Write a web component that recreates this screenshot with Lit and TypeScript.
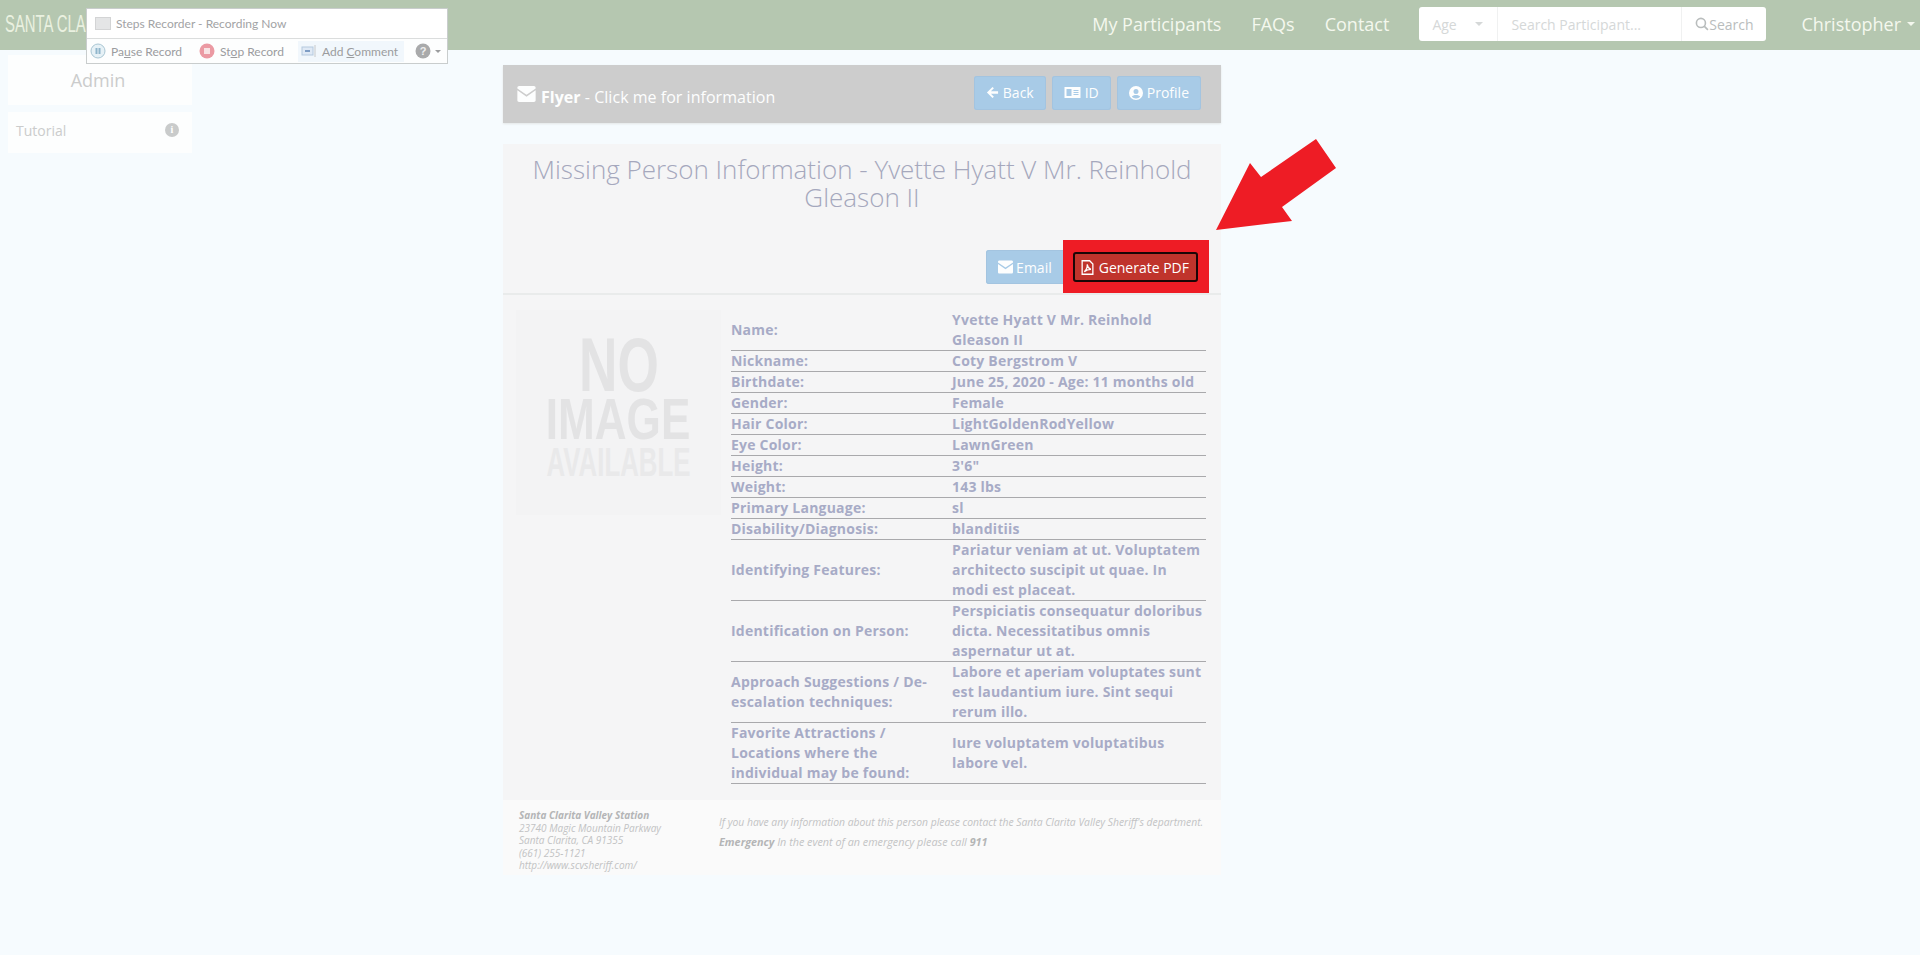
import { html, LitElement, css } from "lit";
import { customElement } from "lit/decorators.js";

const ENVELOPE = html`<svg class="ico" viewBox="0 0 16 14"><path fill="currentColor" d="M0 1.5C0 .7.7 0 1.500 0h13c.8 0 1.500.7 1.500 1.500v.6L8 7.600 0 2.100zM0 3.800V12.500c0 .8.7 1.500 1.500 1.500h13c.8 0 1.500-.7 1.500-1.500V3.800L8 9.300z"/></svg>`;

const ROWS: [string, string[]][] = [
  ["Name:", ["Yvette Hyatt V Mr. Reinhold", "Gleason II"]],
  ["Nickname:", ["Coty Bergstrom V"]],
  ["Birthdate:", ["June 25, 2020 - Age: 11 months old"]],
  ["Gender:", ["Female"]],
  ["Hair Color:", ["LightGoldenRodYellow"]],
  ["Eye Color:", ["LawnGreen"]],
  ["Height:", ["3'6\""]],
  ["Weight:", ["143 lbs"]],
  ["Primary Language:", ["sl"]],
  ["Disability/Diagnosis:", ["blanditiis"]],
  ["Identifying Features:", ["Pariatur veniam at ut. Voluptatem", "architecto suscipit ut quae. In", "modi est placeat."]],
  ["Identification on Person:", ["Perspiciatis consequatur doloribus", "dicta. Necessitatibus omnis", "aspernatur ut at."]],
  ["Approach Suggestions / De-\nescalation techniques:", ["Labore et aperiam voluptates sunt", "est laudantium iure. Sint sequi", "rerum illo."]],
  ["Favorite Attractions /\nLocations where the\nindividual may be found:", ["Iure voluptatem voluptatibus", "labore vel."]],
];

@customElement("app-root")
export class AppRoot extends LitElement {
  static styles = css`
    :host {
      display: block;
      position: relative;
      height: 955px;
      overflow: hidden;
      background: #f6fbfe;
      font-family: "Open Sans", sans-serif;
      color: #a7abc6;
    }

    /* top bar */
    .navbar {
      height: 50px;
      box-sizing: border-box;
      padding-bottom: 2px;
      background: #b5c7b0;
      display: flex;
      align-items: center;
      color: #f4f8ee;
    }
    .brand {
      margin-left: 5px;
      font-family: "Liberation Sans", sans-serif;
      font-size: 24px;
      transform: scaleX(0.62);
      transform-origin: left center;
      white-space: nowrap;
      color: #eaf1e0;
    }
    .nav-links {
      margin-left: auto;
      display: flex;
      gap: 30px;
      font-size: 18px;
    }
    .search {
      margin-left: 30px;
      width: 347px;
      height: 34px;
      box-sizing: border-box;
      background: #fff;
      border-radius: 3px;
      display: grid;
      grid-template-columns: 79px 1fr 84px;
      font-size: 14px;
      color: #d5d8d8;
    }
    .search > div {
      display: flex;
      align-items: center;
    }
    .search .age {
      padding-left: 13px;
      justify-content: space-between;
      padding-right: 14px;
      border-right: 1px solid #f0f1f1;
    }
    .caret-s {
      width: 0;
      height: 0;
      border: 4px solid transparent;
      border-top-color: currentColor;
      border-bottom: 0;
    }
    .caret-xs {
      border-width: 3px 3px 0;
    }
    .search .field {
      padding-left: 13px;
      border-right: 1px solid #f0f1f1;
    }
    .search .go {
      color: #b9bdbd;
      justify-content: center;
      gap: 0;
    }
    .user {
      margin: 0 5px 0 35px;
      font-size: 18px;
      display: flex;
      align-items: center;
      gap: 6px;
    }

    /* page */
    .page {
      display: grid;
      grid-template-columns: 503px 718px;
    }
    .side {
      padding: 5px 0 0 8px;
      width: 184px;
      color: #cbcccc;
    }
    .side .head {
      height: 50px;
      box-sizing: border-box;
      padding-right: 4px;
      background: #fdfefe;
      display: flex;
      align-items: center;
      justify-content: center;
      font-size: 18px;
    }
    .side .item {
      margin-top: 7px;
      height: 41px;
      box-sizing: border-box;
      padding: 0 13px 4px 8px;
      background: #fdfefe;
      display: flex;
      align-items: center;
      justify-content: space-between;
      font-size: 14px;
    }
    .info {
      width: 14px;
      height: 14px;
      border-radius: 50%;
      background: #c9cbcb;
      color: #fff;
      font: bold 10px/14px "Liberation Serif", serif;
      text-align: center;
      margin-top: -1px;
    }

    .flyer-bar {
      margin-top: 15px;
      height: 58px;
      box-sizing: border-box;
      background: #cdcdcd;
      box-shadow: 0 1px 2px #e3e6e6;
      padding: 0 20px 0 14px;
      display: flex;
      align-items: center;
      justify-content: space-between;
      color: #fdfefe;
      font-size: 16px;
    }
    .flyer-title {
      display: flex;
      align-items: center;
      gap: 5px;
      padding-top: 5px;
      letter-spacing: 0.03px;
    }
    .flyer-title .ico {
      width: 19px;
      height: 16px;
      margin-top: -5px;
    }
    .btns {
      display: flex;
      gap: 6px;
      margin-top: -3px;
    }
    .btn {
      height: 34px;
      box-sizing: border-box;
      padding: 0 12px;
      border-radius: 3px;
      background: #a8cbe7;
      box-shadow: inset 0 0 0 1px #a3c4e0;
      color: #fdfefe;
      font-size: 14px;
      display: flex;
      align-items: center;
      gap: 4px;
      white-space: nowrap;
    }
    .ico {
      width: 13px;
      height: 13px;
      flex: none;
    }
    .ico-id {
      width: 17px;
    }
    .ico-user {
      width: 14px;
      height: 14px;
    }

    .card {
      margin-top: 21px;
      background: #f5f5f6;
      height: 731px;
      display: flex;
      flex-direction: column;
    }
    h1 {
      margin: 0;
      padding: 11px 20px 0;
      height: 95px;
      font-size: 26px;
      line-height: 28px;
      font-weight: 300;
      text-align: center;
      color: #a5a8bd;
    }
    .actions {
      display: flex;
      justify-content: flex-end;
      padding-right: 23px;
      height: 45px;
      box-sizing: border-box;
      border-bottom: 2px solid #e9ebeb;
    }
    .email {
      border-radius: 3px 0 0 3px;
      padding: 0 16px 0 12px;
      gap: 3px;
    }
    .email .ico {
      width: 15px;
      height: 14px;
    }
    .pdf-wrap {
      position: relative;
      z-index: 0;
      margin-left: 5px;
    }
    .pdf {
      position: relative;
      height: 30px;
      margin-top: 2px;
      padding: 0 7px 0 6px;
      gap: 5px;
      background: #c0342c;
      border: 2px solid #1b0606;
      box-shadow: none;
      color: #fff;
    }
    .pdf .ico {
      height: 15px;
    }
    /* annotation drawn on top of the screenshot */
    .pdf::before {
      content: "";
      position: absolute;
      inset: -14px -13px -13px -12px;
      background: #ee1c25;
      z-index: -1;
    }

    .details {
      display: grid;
      grid-template-columns: 205px 475px;
      column-gap: 10px;
      padding: 15px 0 0 13px;
      flex: 1;
    }
    .no-image {
      height: 205px;
      background: #f3f3f4;
      display: flex;
      flex-direction: column;
      align-items: center;
      padding-top: 27px;
      box-sizing: border-box;
      font-family: "Liberation Sans", sans-serif;
      font-weight: bold;
      color: #e3e3e4;
    }
    .no-image span {
      display: block;
      white-space: nowrap;
    }
    .no-image .a { font-size: 76px; line-height: 55px; transform: scaleX(0.7); }
    .no-image .b { font-size: 58px; line-height: 42px; margin-top: 6px; transform: scaleX(0.76); }
    .no-image .c { font-size: 40px; line-height: 29px; margin-top: 8px; transform: scaleX(0.645); color: #e9e9ea; }

    .row {
      display: grid;
      grid-template-columns: 221px 254px;
      border-bottom: 1px solid #a9a9ac;
      font-size: 14px;
      line-height: 20px;
      font-weight: 700;
      letter-spacing: 0.22px;
      align-items: center;
      white-space: pre;
    }

    .foot {
      height: 75px;
      background: #fafafa;
      display: flex;
      font-style: italic;
      font-size: 10px;
      color: #c2c3c4;
      line-height: 12.5px;
      padding: 9px 0 0 16px;
      box-sizing: border-box;
    }
    .foot .left {
      width: 200px;
    }
    .foot b {
      color: #b4b5b6;
    }
    .foot .right {
      padding-top: 7px;
      white-space: nowrap;
    }
    .foot p {
      margin: 0 0 7px;
      font-size: 10.35px;
    }
    .foot p.em {
      font-size: 10.8px;
    }

    /* steps recorder window floats over the page */
    .recorder {
      position: absolute;
      left: 86px;
      top: 8px;
      width: 362px;
      height: 56px;
      box-sizing: border-box;
      background: #fff;
      border: 1px solid #c9cdcd;
      font-family: Lato, sans-serif;
      font-size: 12px;
      color: #9b9c9e;
      display: flex;
      flex-direction: column;
      white-space: nowrap;
    }
    .rec-title {
      height: 30px;
      flex: none;
      box-sizing: border-box;
      display: flex;
      align-items: center;
      gap: 5px;
      padding-left: 8px;
      color: #a2a3a5;
      border-bottom: 1px solid #dbdddd;
    }
    .rec-app {
      width: 14px;
      height: 11px;
      background: #e4e5e6;
      border: 1px solid #d3d4d5;
    }
    .rec-tools {
      flex: 1;
      display: flex;
      align-items: center;
      padding-left: 3px;
      background: #fdfefe;
    }
    .tool {
      display: flex;
      align-items: center;
      gap: 5px;
      margin-right: 17px;
    }
    .tool u {
      text-underline-offset: 1px;
    }
    .tool svg {
      flex: none;
    }
    .tool.stop {
      margin-right: 14px;
    }
    .tool.sel {
      background: #f1f7fc;
      padding: 3px 6px 3px 3px;
      margin-right: 11px;
    }
    .help {
      display: flex;
      align-items: center;
      gap: 4px;
    }

    .arrow {
      position: absolute;
      left: 1205px;
      top: 130px;
    }
  `;

  render() {
    return html`
      <div class="navbar">
        <div class="brand">SANTA CLA</div>
        <div class="nav-links"><span>My Participants</span><span>FAQs</span><span>Contact</span></div>
        <div class="search">
          <div class="age">Age<span class="caret-s"></span></div>
          <div class="field">Search Participant...</div>
          <div class="go">
            <svg width="14" height="14" viewBox="0 0 13 13" fill="none" stroke="currentColor" stroke-width="1.500"><circle cx="5.500" cy="5.500" r="4.200"/><path d="M8.500 8.500 12 12"/></svg>Search
          </div>
        </div>
        <div class="user">Christopher <span class="caret-s"></span></div>
      </div>

      <div class="page">
        <aside class="side">
          <div class="head">Admin</div>
          <div class="item">Tutorial<span class="info">i</span></div>
        </aside>
        <main>
          <div class="flyer-bar">
            <div class="flyer-title">${ENVELOPE}<span><b>Flyer</b> - Click me for information</span></div>
            <div class="btns">
              <div class="btn"><svg class="ico" viewBox="0 0 14 13"><path fill="currentColor" d="M7 .5 1 6.500l6 6 1.500-1.500-3.200-3.100H13V5.100H5.300L8.500 2z"/></svg>Back</div>
              <div class="btn"><svg class="ico ico-id" viewBox="0 0 16 13"><path fill="currentColor" fill-rule="evenodd" d="M0 1h16v11H0zM2 3v7h5V3zm7 1v1h5V4zm0 2v1h5V6zm0 2v1h5V8z"/></svg>ID</div>
              <div class="btn"><svg class="ico ico-user" viewBox="0 0 14 14"><path fill="currentColor" fill-rule="evenodd" d="M7 0a7 7 0 1 0 0 14A7 7 0 0 0 7 0zm0 3a2.500 2.500 0 1 1 0 5 2.500 2.500 0 0 1 0-5zM2.800 10.800C3.500 9.500 5 9 7 9s3.500.5 4.200 1.800A5.500 5.500 0 0 1 7 12.500a5.500 5.500 0 0 1-4.200-1.700z"/></svg>Profile</div>
            </div>
          </div>

          <section class="card">
            <h1>Missing Person Information - Yvette Hyatt V Mr. Reinhold Gleason II</h1>
            <div class="actions">
              <div class="btn email">${ENVELOPE}Email</div>
              <div class="pdf-wrap">
                <div class="btn pdf">
                  <svg class="ico" viewBox="0 0 12 14" fill="none" stroke="currentColor" stroke-width="1.200"><path d="M1 .7h7l3 3v9.600H1z"/><path d="M3 11c2-2 3-5 2.700-7C6 6 7 8 9.200 8.800 7 8.800 5 9.500 3 11z"/></svg>Generate PDF
                </div>
              </div>
            </div>

            <div class="details">
              <div class="no-image">
                <span class="a">NO</span><span class="b">IMAGE</span><span class="c">AVAILABLE</span>
              </div>
              <div>
                ${ROWS.map(
                  ([label, value]) => html`<div class="row"><div>${label}</div><div>${value.join("\n")}</div></div>`
                )}
              </div>
            </div>

            <footer class="foot">
              <div class="left">
                <b>Santa Clarita Valley Station</b><br />
                23740 Magic Mountain Parkway<br />
                Santa Clarita, CA 91355<br />
                (661) 255-1121<br />
                http://www.scvsheriff.com/
              </div>
              <div class="right">
                <p>If you have any information about this person please contact the Santa Clarita Valley Sheriff's department.</p>
                <p class="em"><b>Emergency</b> In the event of an emergency please call <b>911</b></p>
              </div>
            </footer>
          </section>
        </main>
      </div>

      <div class="recorder">
        <div class="rec-title"><span class="rec-app"></span>Steps Recorder - Recording Now</div>
        <div class="rec-tools">
          <div class="tool">
            <svg width="16" height="16" viewBox="0 0 16 16"><circle cx="8" cy="8" r="7" fill="#e6f1f6" stroke="#a9c6d3"/><rect x="5.500" y="5" width="2" height="6" fill="#8fb6cb"/><rect x="8.500" y="5" width="2" height="6" fill="#8fb6cb"/></svg>
            <span>Pa<u>u</u>se Record</span>
          </div>
          <div class="tool stop">
            <svg width="16" height="16" viewBox="0 0 16 16"><circle cx="8" cy="8" r="7.500" fill="#eb9aa3"/><rect x="5" y="5" width="6" height="6" fill="#f8e3e4"/></svg>
            <span>St<u>o</u>p Record</span>
          </div>
          <div class="tool sel">
            <svg width="16" height="14" viewBox="0 0 16 14"><rect x="1" y="3" width="11" height="8" fill="#dfe9f5" stroke="#b5c9de"/><rect x="4" y="6" width="5" height="2" fill="#7d9cc4"/><path d="M14 1v12" stroke="#c6c8ca"/></svg>
            <span>Add <u>C</u>omment</span>
          </div>
          <div class="help">
            <svg width="16" height="16" viewBox="0 0 16 16"><circle cx="8" cy="8" r="7.500" fill="#a9aaab"/><text x="8" y="12" font-size="11" font-weight="bold" text-anchor="middle" fill="#eee" font-family="Liberation Sans">?</text></svg>
            <span class="caret-s caret-xs"></span>
          </div>
        </div>
      </div>

      <svg class="arrow" width="150" height="110" viewBox="1205 130 150 110">
        <polygon fill="#ee1c25" points="1216,230 1250,163 1261,177 1316,139 1336,168 1282,207 1292,221" />
      </svg>
    `;
  }
}
